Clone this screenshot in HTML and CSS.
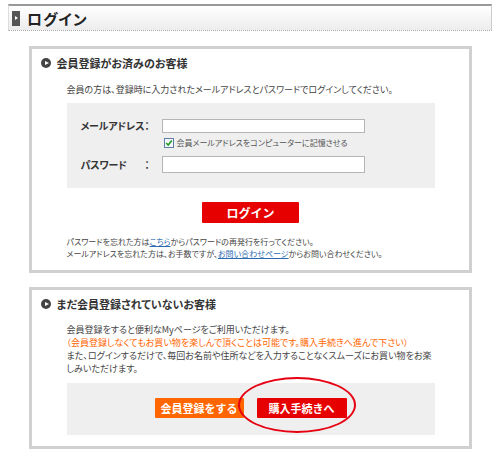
FILE: index.html
```html
<!DOCTYPE html>
<html lang="ja">
<head>
  <meta charset="UTF-8" />
  <title>ログイン</title>
  <link rel="stylesheet" href="styles.css">
</head>
<body>
  <div class="page-title">
    <span class="title-mark"></span>
    <h1>ログイン</h1>
  </div>

  <div class="panel">
    <h2 class="panel-title"><span class="arrow-icon"></span>会員登録がお済みのお客様</h2>
    <p class="lead">会員の方は、登録時に入力されたメールアドレスとパスワードでログインしてください。</p>

    <div class="form-box">
      <div class="form-row">
        <label for="email">メールアドレス</label>
        <span class="colon">：</span>
        <input type="text" id="email" class="field" />
      </div>
      <div class="remember">
        <svg class="check" width="10" height="10" viewBox="0 0 10 10">
          <rect x="0.5" y="0.5" width="9" height="9" fill="#f4f8fc" stroke="#5b7fa6" />
          <path d="M2.2 5 L4.2 7 L7.8 2.6" fill="none" stroke="#1e9a1e" stroke-width="1.6" />
        </svg>
        会員メールアドレスをコンピューターに記憶させる
      </div>
      <div class="form-row">
        <label for="password">パスワード</label>
        <span class="colon">：</span>
        <input type="password" id="password" class="field tall" />
      </div>
    </div>

    <div class="btn-row">
      <button class="btn btn-red btn-login">ログイン</button>
    </div>

    <p class="note">
      パスワードを忘れた方は<a href="#">こちら</a>からパスワードの再発行を行ってください。<br>
      メールアドレスを忘れた方は、お手数ですが、<a href="#">お問い合わせページ</a>からお問い合わせください。
    </p>
  </div>

  <div class="panel">
    <h2 class="panel-title"><span class="arrow-icon"></span>まだ会員登録されていないお客様</h2>
    <p class="lead guest">
      会員登録をすると便利なMyページをご利用いただけます。<br>
      <span class="notice">（会員登録しなくてもお買い物を楽しんで頂くことは可能です。購入手続きへ進んで下さい）</span><br>
      また、ログインするだけで、毎回お名前や住所などを入力することなくスムーズにお買い物をお楽<br>しみいただけます。
    </p>

    <div class="action-box">
      <button class="btn btn-orange">会員登録をする</button>
      <div class="circled">
        <button class="btn btn-red">購入手続きへ</button>
        <span class="ring"></span>
      </div>
    </div>
  </div>
</body>
</html>
```

FILE: styles.css
```css
body {
  margin: 0;
  background-color: #fff;
  color: #444;
  font-family: "Noto Sans CJK JP", "Noto Sans", sans-serif;
  font-feature-settings: "palt";
}

.page-title {
  margin: 4px 8px 0 8px;
  height: 24px;
  display: flex;
  align-items: center;
  padding-left: 3px;
  border-top: 2px solid #999;
  border-bottom: 1px dotted #aaa;
  border-left: 1px solid #ddd;
  border-right: 1px solid #ccc;
  background: linear-gradient(#fff, #ececec);
}

.title-mark {
  position: relative;
  width: 8px;
  height: 15px;
  background-color: #555;
  margin-right: 7px;
}

.title-mark::after {
  content: "";
  position: absolute;
  left: 3px;
  top: 5px;
  border-left: 3px solid #fff;
  border-top: 2.5px solid transparent;
  border-bottom: 2.5px solid transparent;
}

h1 {
  margin: 0;
  font-size: 15px;
  font-weight: bold;
  color: #222;
  letter-spacing: 1px;
}

.panel {
  box-sizing: border-box;
  width: 443px;
  margin: 15px auto 0 auto;
  border: 3px solid #d0d0d0;
  padding: 6px 34px 11px 35px;
}

.panel + .panel {
  margin-top: 14px;
}

.panel-title {
  display: flex;
  align-items: center;
  margin: 0 0 0 -26px;
  height: 16px;
  font-size: 11px;
  font-weight: bold;
  color: #333;
}

.arrow-icon {
  position: relative;
  width: 10px;
  height: 10px;
  border-radius: 50%;
  background-color: #444;
  margin-right: 6px;
}

.arrow-icon::after {
  content: "";
  position: absolute;
  left: 4px;
  top: 2.5px;
  border-left: 4px solid #fff;
  border-top: 2.5px solid transparent;
  border-bottom: 2.5px solid transparent;
}

.lead {
  margin: 12px 0 0 0;
  font-size: 9px;
  line-height: 13px;
  color: #444;
}

.lead.guest {
  margin-top: 11px;
  white-space: nowrap;
}

.notice {
  color: #ff6600;
}

.form-box {
  margin-top: 7px;
  background-color: #efefef;
  padding: 15px 0 15px 14px;
}

.form-row {
  display: grid;
  grid-template-columns: 64px 17px 203px;
  align-items: center;
}

.form-row label {
  font-size: 10px;
  font-weight: bold;
  color: #333;
  white-space: nowrap;
  letter-spacing: -0.2px;
}

.colon {
  font-size: 10px;
  font-weight: bold;
  color: #333;
}

.field {
  box-sizing: border-box;
  width: 203px;
  height: 14px;
  margin: 0;
  border: 1px solid #b5b5b5;
  background-color: #fff;
}

.field.tall {
  height: 17px;
}

.remember {
  display: flex;
  align-items: center;
  gap: 3px;
  margin: 4px 0 8px 81px;
  font-size: 8px;
  color: #555;
}

.check {
  flex-shrink: 0;
  margin-left: 2px;
}

.btn-row {
  display: flex;
  justify-content: center;
  margin-top: 14px;
}

.btn {
  border: none;
  border-radius: 1px;
  padding: 0;
  height: 20px;
  color: #fff;
  font-family: inherit;
  font-size: 11px;
  font-weight: bold;
  cursor: pointer;
}

.btn-red {
  background-color: #e60000;
  width: 90px;
}

.btn-login {
  width: 97px;
  height: 21px;
  font-size: 12px;
}

.btn-orange {
  background-color: #ff6600;
  width: 89px;
}

.note {
  margin: 13px 0 0 0;
  font-size: 8px;
  line-height: 11.5px;
  color: #444;
}

.note a {
  color: #2a6ab0;
}

.action-box {
  display: flex;
  justify-content: center;
  gap: 13px;
  margin-top: 8px;
  padding: 15px 0 17px 0;
  background-color: #efefef;
}

.circled {
  position: relative;
}

.circled .btn {
  display: block;
}

.ring {
  position: absolute;
  left: -19px;
  top: -21px;
  width: 114px;
  height: 52px;
  border: 2px solid #e60012;
  border-radius: 50%;
}
```
